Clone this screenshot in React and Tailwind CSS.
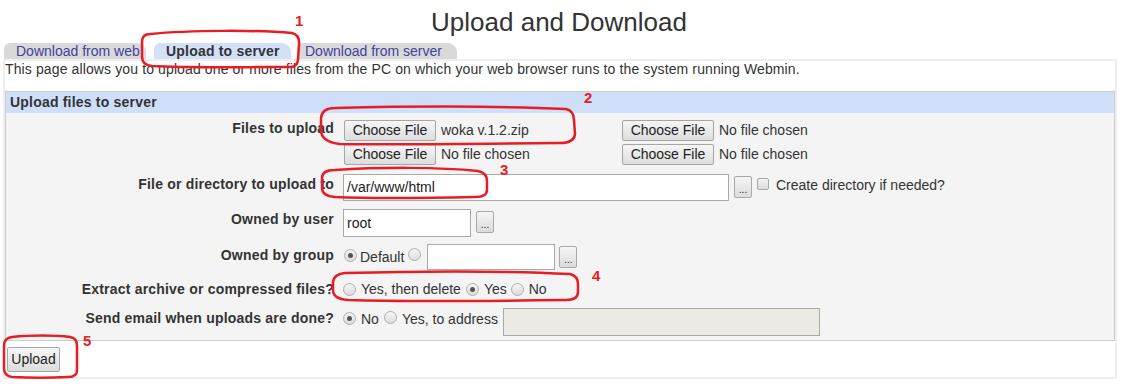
import React from 'react';

function Radio({ checked, className = '' }) {
    return (
        <span className={`flex w-[13px] h-[13px] shrink-0 items-center justify-center rounded-full border border-[#b0b0b0] bg-gradient-to-b from-[#f6f6f6] to-[#dcdcdc] ${className}`}>
            {checked && <span className="block w-[5px] h-[5px] rounded-full bg-[#555]" />}
        </span>
    );
}

function DotsButton({ className = '' }) {
    return (
        <span className={`flex w-[18px] h-[22px] shrink-0 items-end justify-center pb-[2px] border border-[#a9a9a9] rounded-[2px] bg-gradient-to-b from-[#f5f5f5] to-[#dcdcdc] text-[10px] leading-[10px] text-[#222] ${className}`}>
            ...
        </span>
    );
}

function FileInput({ name }) {
    return (
        <div className="flex items-center w-[278px] h-[21px]">
            <span className="flex w-[92px] h-[21px] items-center justify-center border border-[#a6a6a6] rounded-[2px] bg-gradient-to-b from-[#f6f6f6] to-[#dddddd] text-[#222]">
                Choose File
            </span>
            <span className="ml-[5px] text-[#333]">{name}</span>
        </div>
    );
}

function Label({ children, pt = 'pt-0' }) {
    return (
        <div className={`w-[328px] shrink-0 text-right font-bold text-[#333] leading-[16px] tracking-[0.2px] whitespace-nowrap ${pt}`}>
            {children}
        </div>
    );
}

function Marks() {
    const stroke = { fill: 'none', stroke: '#e81c24', strokeWidth: 2.5, strokeLinejoin: 'round' };
    return (
        <svg className="absolute left-0 top-0 pointer-events-none" width="1127" height="388">
            <path {...stroke} d="M 150 34 C 190 30, 260 30, 292 33 Q 300 35 299 45 L 298 60 Q 297 68 288 67 C 240 67, 190 68, 152 66 Q 142 65 142 57 L 142 42 Q 142 34 150 34 Z" />
            <path {...stroke} d="M 335 108 C 420 106, 500 106, 566 109 Q 574 111 574 120 L 575 134 Q 574 143 560 143 C 480 144, 400 145, 340 144 Q 321 142 321 130 L 321 118 Q 322 108 335 108 Z" />
            <path {...stroke} d="M 335 170 C 380 167, 440 167, 478 171 Q 487 173 487 181 L 487 190 Q 487 197 475 197 C 430 198, 380 199, 335 197 Q 322 196 322 188 L 322 178 Q 322 170 335 170 Z" />
            <path {...stroke} d="M 345 273 C 420 271, 510 271, 570 274 Q 578 276 578 284 L 578 292 Q 578 300 566 300 C 490 301, 410 302, 348 300 Q 333 299 333 290 L 333 282 Q 334 274 345 273 Z" />
            <path {...stroke} d="M 12 337 C 30 335, 55 335, 70 337 Q 77 338 77 346 L 77 370 Q 77 377 68 377 C 50 378, 30 378, 12 377 Q 4 376 4 368 L 4 346 Q 4 338 12 337 Z" />
            <g fill="#e81c24" fontFamily="'Liberation Sans', Arial, sans-serif" fontWeight="bold" fontSize="15">
                <text x="295" y="26">1</text>
                <text x="584" y="103">2</text>
                <text x="500" y="175">3</text>
                <text x="592" y="281">4</text>
                <text x="83" y="346">5</text>
            </g>
        </svg>
    );
}

export default function App() {
    return (
        <div className="relative w-[1127px] h-[388px] overflow-hidden bg-white font-['Liberation_Sans',Arial,sans-serif] text-[14px] text-[#333]">
            <h1 className="w-[1118px] pt-[7px] text-center text-[26px] leading-[30px] text-[#333]">
                Upload and Download
            </h1>

            <div className="flex items-end mt-[6px] h-[16px] leading-[16px]">
                <div className="ml-[4px] w-[142px] h-[16px] pl-[12px] rounded-tl-[6px] rounded-tr-[9px] bg-[#d9d9d9] text-[#43439b] whitespace-nowrap overflow-hidden">
                    Download from web
                </div>
                <div className="ml-[8px] w-[137px] h-[16px] pl-[12px] rounded-tl-[6px] rounded-tr-[9px] bg-[#d2e0f8] font-bold tracking-[0.2px] text-[#333] whitespace-nowrap">
                    Upload to server
                </div>
                <div className="ml-[6px] w-[160px] h-[16px] pl-[8px] rounded-tl-[6px] rounded-tr-[9px] bg-[#d9d9d9] text-[#43439b] whitespace-nowrap">
                    Download from server
                </div>
            </div>

            <div className="ml-[3px] w-[1114px] h-[320px] border-2 border-[#efefef]">
                <p className="leading-[16px] whitespace-nowrap tracking-[0.12px]">
                    This page allows you to upload one or more files from the PC on which your web browser runs to the system running Webmin.
                </p>

                <div className="mt-[14px] border border-[#cccccc]">
                    <div className="h-[21px] pl-[4px] bg-[#cfdffa] font-bold leading-[21px] tracking-[0.2px]">
                        Upload files to server
                    </div>
                    <div className="h-[227px] bg-[#f4f4f4] pt-[7px]">
                        <div className="flex items-start">
                            <Label>Files to upload</Label>
                            <div className="ml-[10px] flex flex-col gap-[3px]">
                                <div className="flex">
                                    <FileInput name="woka v.1.2.zip" />
                                    <FileInput name="No file chosen" />
                                </div>
                                <div className="flex">
                                    <FileInput name="No file chosen" />
                                    <FileInput name="No file chosen" />
                                </div>
                            </div>
                        </div>

                        <div className="flex items-start mt-[9px]">
                            <Label pt="pt-[2px]">File or directory to upload to</Label>
                            <div className="ml-[9px] flex items-start">
                                <div className="w-[386px] h-[27px] pl-[3px] border border-[#a9a9a9] bg-white leading-[25px] text-[#222]">
                                    /var/www/html
                                </div>
                                <DotsButton className="ml-[5px] mt-[2px]" />
                                <span className="block ml-[5px] mt-[4px] w-[12px] h-[12px] rounded-[2px] border border-[#a8a8a8] bg-gradient-to-b from-[#f4f4f4] to-[#dadada]" />
                                <span className="ml-[7px] mt-[3px] leading-[16px]">Create directory if needed?</span>
                            </div>
                        </div>

                        <div className="flex items-start mt-[8px]">
                            <Label pt="pt-[2px]">Owned by user</Label>
                            <div className="ml-[9px] flex items-start">
                                <div className="w-[128px] h-[28px] pl-[3px] border border-[#a9a9a9] bg-white leading-[26px] text-[#222]">
                                    root
                                </div>
                                <DotsButton className="ml-[5px] mt-[2px]" />
                            </div>
                        </div>

                        <div className="flex items-start mt-[7px]">
                            <Label pt="pt-[3px]">Owned by group</Label>
                            <div className="ml-[10px] flex items-start">
                                <Radio checked className="mt-[5px]" />
                                <span className="ml-[3px] mt-[5px] leading-[16px]">Default</span>
                                <Radio className="ml-[4px] mt-[4px]" />
                                <div className="ml-[6px] w-[128px] h-[26px] border border-[#a9a9a9] bg-white" />
                                <DotsButton className="ml-[4px] mt-[2px]" />
                            </div>
                        </div>

                        <div className="flex items-center mt-[10px] h-[18px]">
                            <Label>Extract archive or compressed files?</Label>
                            <div className="ml-[9px] flex items-center leading-[16px]">
                                <Radio />
                                <span className="ml-[5px]">Yes, then delete</span>
                                <Radio checked className="ml-[5px]" />
                                <span className="ml-[5px]">Yes</span>
                                <Radio className="ml-[4px]" />
                                <span className="ml-[5px]">No</span>
                            </div>
                        </div>

                        <div className="flex items-start mt-[10px]">
                            <Label pt="pt-[2px]">Send email when uploads are done?</Label>
                            <div className="ml-[9px] flex items-start">
                                <Radio checked className="mt-[4px]" />
                                <span className="ml-[5px] mt-[3px] leading-[16px]">No</span>
                                <Radio className="ml-[5px] mt-[3px]" />
                                <span className="ml-[5px] mt-[3px] leading-[16px]">Yes, to address</span>
                                <div className="ml-[5px] w-[317px] h-[28px] border border-[#a9a9a9] bg-[#ebebe4]" />
                            </div>
                        </div>
                    </div>
                </div>

                <div className="ml-[2px] mt-[6px] flex w-[53px] h-[25px] items-center justify-center border border-[#a6a6a6] rounded-[2px] bg-gradient-to-b from-[#f6f6f6] to-[#dddddd] text-[#222]">
                    Upload
                </div>
            </div>

            <Marks />
        </div>
    );
}
